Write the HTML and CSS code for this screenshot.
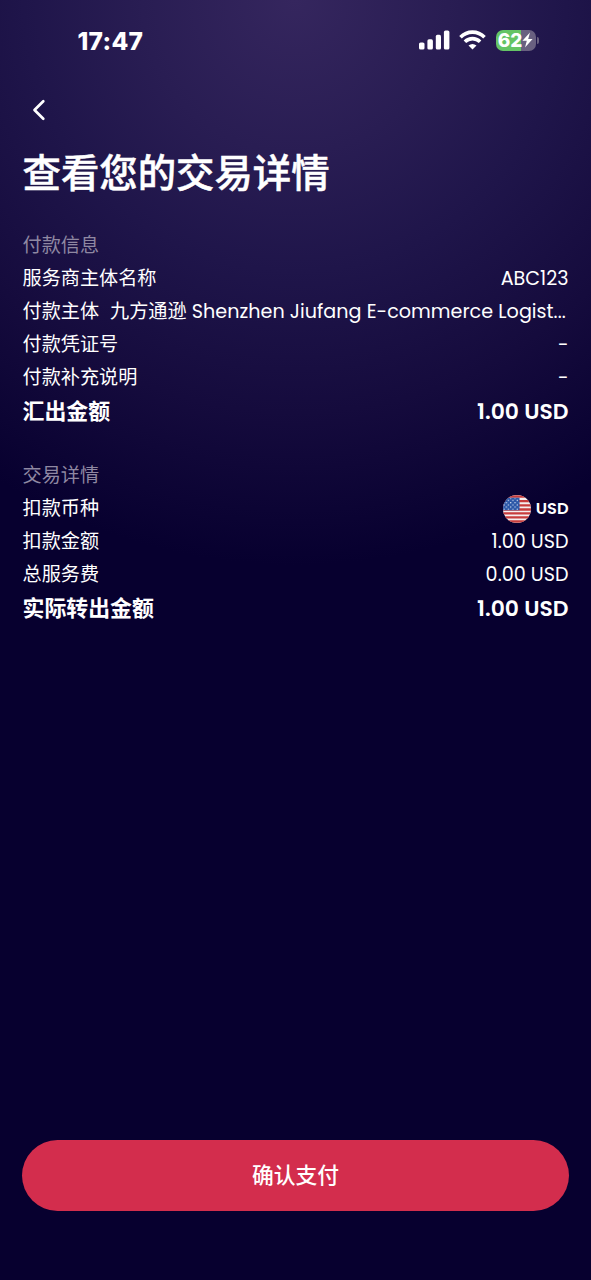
FILE: index.html
```html
<!DOCTYPE html>
<html lang="zh-CN">
<head>
<meta charset="utf-8">
<meta name="viewport" content="width=device-width, initial-scale=1">
<title>查看您的交易详情</title>
<link rel="stylesheet" href="styles.css">
</head>
<body>
<main class="screen">
  <header class="status">
    <span class="time">17:47</span>
    <div class="indicators">
      <svg class="signal" width="31" height="20" viewBox="0 0 31 20" fill="#fff"><rect x="0" y="12.5" width="5.5" height="7" rx="1.6"/><rect x="8.4" y="9.3" width="5.5" height="10.2" rx="1.6"/><rect x="16.8" y="4.8" width="5.2" height="14.7" rx="1.6"/><rect x="24.9" y="0.5" width="5.5" height="19" rx="1.6"/></svg>
      <svg class="wifi" width="27" height="20" viewBox="0 0 27 20" fill="none" stroke="#fff" stroke-width="3.6"><path d="M1.5 7.2Q6.5 2.1 13.5 2.1T25.5 7.2"/><path d="M5.9 11.8Q9.2 8.6 13.5 8.6T21.1 11.8"/><path d="M9.5 15.6Q13.5 12.2 17.5 15.6L13.5 19.6Z" fill="#fff" stroke="none"/></svg>
      <div class="battery">
        <span class="level">62</span>
        <svg width="11" height="16" viewBox="0 0 11 16" fill="#fff"><path d="M8 0.5L0.4 8.8H4.8L3 15.5L10.6 7H6.2Z"/></svg>
      </div>
      <span class="nub"></span>
    </div>
  </header>
  <nav class="nav">
    <svg width="14" height="22" viewBox="0 0 14 22" fill="none" stroke="#fff" stroke-width="2.7" stroke-linecap="round" stroke-linejoin="round"><path d="M11.3 2.2L2.5 11L11.3 19.8"/></svg>
  </nav>
  <h1 class="title">查看您的交易详情</h1>
  <section class="group">
    <h2 class="row heading">付款信息</h2>
    <div class="row"><span>服务商主体名称</span><span class="value">ABC123</span></div>
    <div class="row"><span>付款主体</span><span class="value company">九方通逊 <span class="latin">Shenzhen Jiufang E-commerce Logist...</span></span></div>
    <div class="row"><span>付款凭证号</span><span class="value">-</span></div>
    <div class="row"><span>付款补充说明</span><span class="value">-</span></div>
    <div class="row total"><span>汇出金额</span><span class="value">1.00 USD</span></div>
  </section>
  <section class="group">
    <h2 class="row heading">交易详情</h2>
    <div class="row"><span>扣款币种</span>
      <span class="currency">
        <svg width="28" height="28" viewBox="0 0 28 28"><defs><clipPath id="disc"><circle cx="14" cy="14" r="14"/></clipPath><pattern id="stars" width="4.4" height="4.4" patternUnits="userSpaceOnUse"><circle cx="1.1" cy="1.1" r=".7" fill="#dfe8f7"/><circle cx="3.3" cy="3.3" r=".7" fill="#dfe8f7"/></pattern></defs><g clip-path="url(#disc)"><path fill="#f5eeee" d="M0 0h28v28H0z"/><path d="M0 1.5h28M0 6.1h28M0 10.3h28M0 14.5h28M0 18.4h28M0 22.3h28M0 26.5h28" stroke="#c73c3c" stroke-width="2.3"/><path fill="#2b57a7" d="M0 2.7h16.5v12.5H0z"/><path fill="url(#stars)" d="M0 3.3h16v11.5H0z"/></g></svg>
        <span>USD</span>
      </span>
    </div>
    <div class="row"><span>扣款金额</span><span class="value">1.00 USD</span></div>
    <div class="row"><span>总服务费</span><span class="value">0.00 USD</span></div>
    <div class="row total"><span>实际转出金额</span><span class="value">1.00 USD</span></div>
  </section>
  <button class="pay">确认支付</button>
</main>
</body>
</html>
```
FILE: styles.css
```css
* { box-sizing: border-box; }
body { margin: 0; background: #07002f; }
.screen {
  display: flex;
  flex-direction: column;
  width: 591px;
  height: 1280px;
  padding: 0 22.5px 69px 22.5px;
  color: #fff;
  font-family: Poppins, Inter, "Noto Sans CJK SC", sans-serif;
  background: radial-gradient(circle 565px at 295px 0, #35265e 0, #291d53 27%, #1f154a 48%, #150b3d 73%, #07002f 100%) #07002f;
}
.status {
  display: flex;
  justify-content: space-between;
  align-items: center;
  height: 80px;
  padding: 0 30px 0 55px;
}
.time { padding-top: 1px; font: 800 24.5px/30px Inter, sans-serif; letter-spacing: .3px; }
.indicators { display: flex; align-items: center; }
.wifi { margin-left: 9px; }
.battery {
  display: flex;
  align-items: center;
  justify-content: center;
  width: 40px;
  height: 21px;
  margin-left: 10px;
  border-radius: 7px;
  background: linear-gradient(90deg, #65c466 62%, #696080 62%);
}
.level { font: 800 19px/21px Inter, sans-serif; }
.nub { width: 2px; height: 7px; margin-left: 1px; border-radius: 0 3px 3px 0; background: #696080; }
.nav { display: flex; align-items: center; height: 60px; padding-left: 9.5px; }
.title {
  margin: 4px 0 0;
  height: 60px;
  font-size: 38.4px;
  line-height: 60px;
  font-weight: 500;
  -webkit-text-stroke: .5px #fff;
}
.group { margin-top: 25px; }
.group + .group { margin-top: 30px; }
.row {
  display: flex;
  align-items: center;
  justify-content: space-between;
  height: 33px;
  margin: 0;
  font-size: 19.15px;
  font-weight: 400;
  line-height: 33px;
  white-space: nowrap;
}
.heading { color: #8f88a2; }
.company { flex: 1; margin-left: 11px; }
.latin { letter-spacing: .03px; }
.total { height: 35px; font-size: 21.9px; font-weight: 600; line-height: 35px; }
.currency { display: flex; align-items: center; gap: 5px; font-size: 16.2px; font-weight: 600; }
.currency svg { display: block; }
.pay {
  height: 71px;
  margin: auto -.5px 0;
  padding: 0 0 4px;
  border: 0;
  border-radius: 36px;
  background: #d32d4d;
  color: #fff;
  font: 500 21.8px/32px "Noto Sans CJK SC", sans-serif;
}
```
